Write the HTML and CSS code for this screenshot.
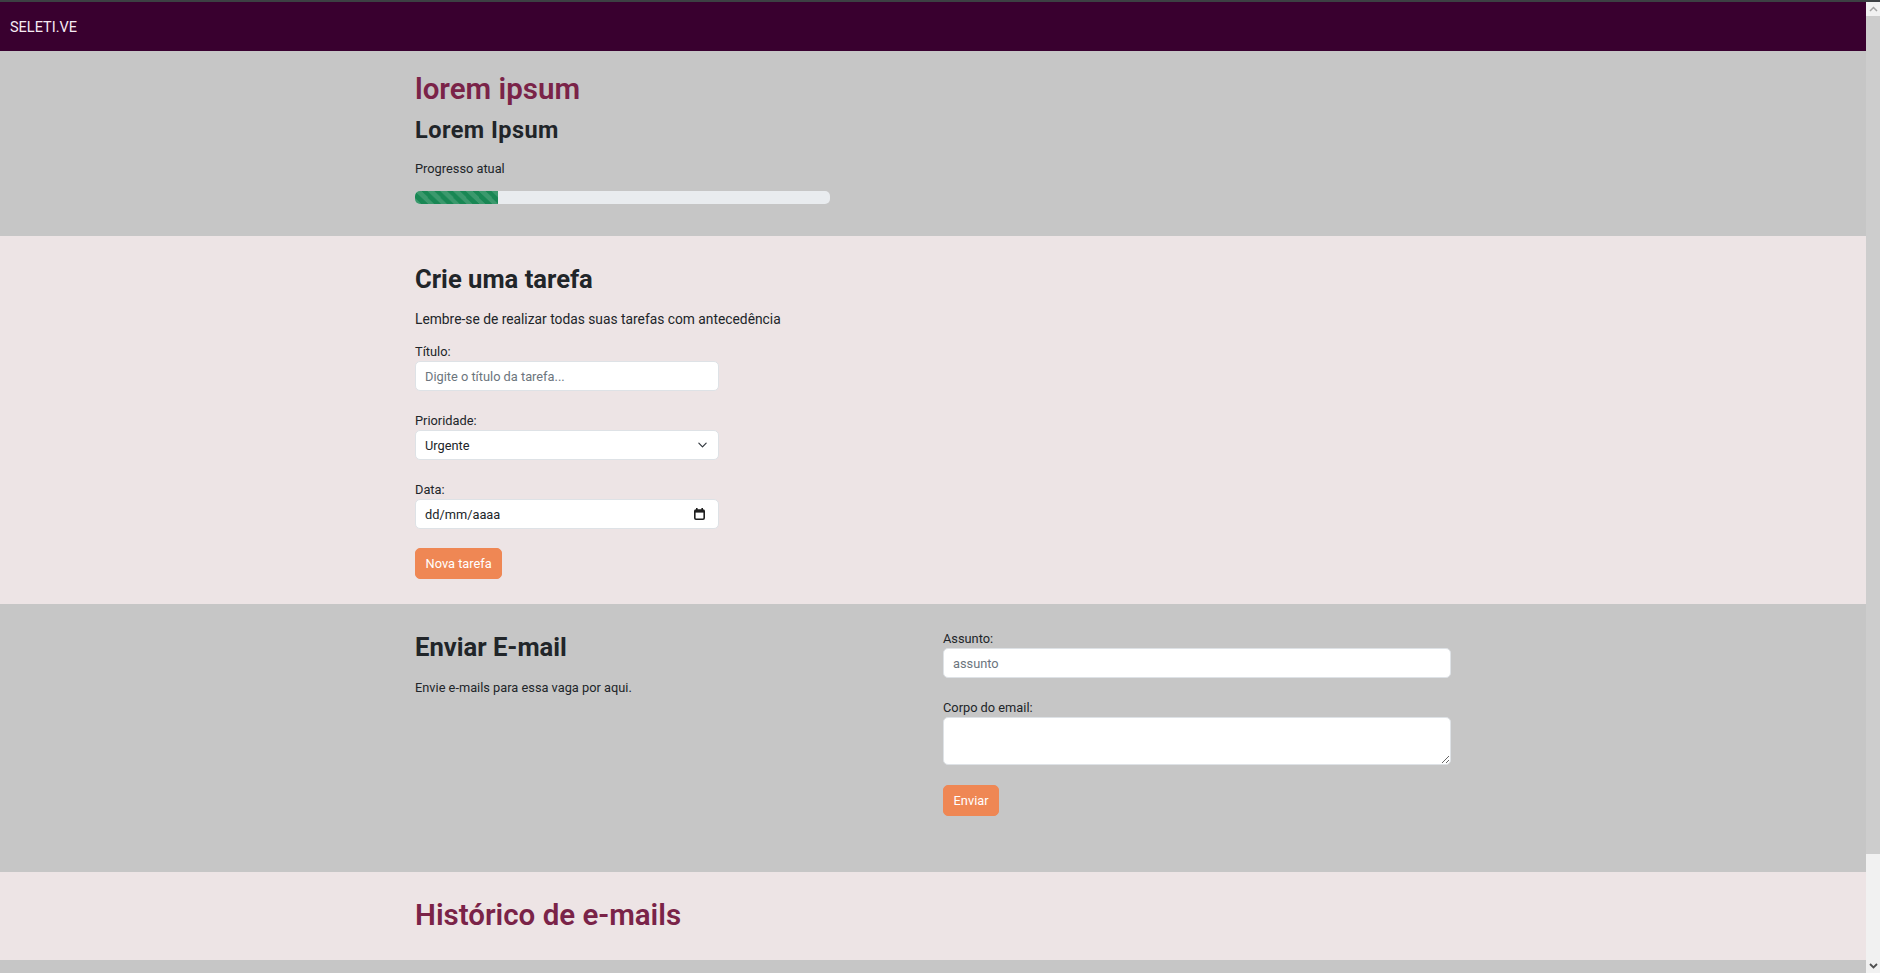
FILE: index.html
```html
<!DOCTYPE html>
<html lang="pt-BR">
<head>
<meta charset="utf-8">
<title>SELETI.VE</title>
<link rel="stylesheet" href="styles.css">
</head>
<body>
<div class="topline"></div>
<div class="window">
  <div class="page">
    <nav class="navbar"><span class="brand">SELETI.VE</span></nav>

    <section class="band band-gray hero">
      <div class="container">
        <h1 class="title-accent">lorem ipsum</h1>
        <h3 class="subtitle">Lorem Ipsum</h3>
        <p class="progress-label">Progresso atual</p>
        <div class="progress"><div class="progress-bar" style="width:20%"></div></div>
      </div>
    </section>

    <section class="band band-pink task">
      <div class="container">
        <h2 class="section-title">Crie uma tarefa</h2>
        <p class="lead-text lead-large">Lembre-se de realizar todas suas tarefas com antecedência</p>
        <div class="task-form">
          <div class="field">
            <label class="label">Título:</label>
            <input class="control" type="text" placeholder="Digite o título da tarefa...">
          </div>
          <div class="field">
            <label class="label">Prioridade:</label>
            <select class="control select"><option>Urgente</option></select>
          </div>
          <div class="field">
            <label class="label">Data:</label>
            <div class="control date-control">
              <span>dd/mm/aaaa</span>
              <svg class="cal-icon" width="11" height="12" viewBox="0 0 11 12"><rect x="2" y="0" width="1.6" height="2.5" fill="#1f1f1f"/><rect x="7.4" y="0" width="1.6" height="2.5" fill="#1f1f1f"/><rect x="0.8" y="2" width="9.4" height="9.2" rx="1.2" fill="none" stroke="#1f1f1f" stroke-width="1.6"/><rect x="0.8" y="2" width="9.4" height="2.6" fill="#1f1f1f"/></svg>
            </div>
          </div>
          <button class="btn">Nova tarefa</button>
        </div>
      </div>
    </section>

    <section class="band band-gray email">
      <div class="container email-grid">
        <div class="email-intro">
          <h2 class="section-title">Enviar E-mail</h2>
          <p class="lead-text">Envie e-mails para essa vaga por aqui.</p>
        </div>
        <div class="email-form">
          <div class="field first">
            <label class="label">Assunto:</label>
            <input class="control" type="text" placeholder="assunto">
          </div>
          <div class="field">
            <label class="label">Corpo do email:</label>
            <textarea class="control textarea"></textarea>
          </div>
          <button class="btn">Enviar</button>
        </div>
      </div>
    </section>

    <section class="band band-pink history">
      <div class="container">
        <h2 class="title-accent">Histórico de e-mails</h2>
      </div>
    </section>

    <section class="band band-gray rest"></section>
  </div>
  <div class="scrollbar">
    <div class="sb-btn sb-up"><svg width="9" height="6" viewBox="0 0 9 6"><path d="M1 5 4.5 1.5 8 5" fill="none" stroke="#a3a3a3" stroke-width="1.5"/></svg></div>
    <div class="sb-thumb"></div>
    <div class="sb-track"></div>
    <div class="sb-btn sb-down"><svg width="9" height="6" viewBox="0 0 9 6"><path d="M1 1 4.5 4.5 8 1" fill="none" stroke="#505050" stroke-width="1.8"/></svg></div>
  </div>
</div>
</body>
</html>
```

FILE: styles.css
```css
* { box-sizing: border-box; }

html, body {
  margin: 0;
  padding: 0;
  height: 973px;
  overflow: hidden;
}

body {
  font-family: Roboto, "Liberation Sans", sans-serif;
  font-size: 12.8px;
  line-height: 19px;
  color: #212529;
  background: #c6c6c6;
}

.topline {
  height: 2px;
  background: #3c4043;
}

.window {
  display: flex;
  height: 971px;
  overflow: hidden;
}

.page {
  flex: 1;
  overflow: hidden;
  display: flex;
  flex-direction: column;
}

.navbar {
  height: 49px;
  flex: none;
  background: #39002f;
  display: flex;
  align-items: center;
  padding-left: 10px;
  padding-top: 3px;
}

.brand {
  color: #f6ebf3;
  font-size: 14.5px;
  line-height: 20px;
}

.band { flex: none; }
.band-gray { background: #c6c6c6; }
.band-pink { background: #ede4e5; }

.container {
  width: 1056px;
  margin: 0 auto;
  padding: 0 10px;
}

h1, h2, h3, p { margin: 0; }

/* hero */
.hero { padding: 21px 0 32px; }

.title-accent {
  font-size: 29.5px;
  line-height: 34px;
  font-weight: 600;
  color: #7a2348;
}

.subtitle {
  margin-top: 11px;
  font-size: 23.5px;
  line-height: 27px;
  font-weight: 700;
  letter-spacing: 0.45px;
  color: #212529;
}

.progress-label { margin-top: 15px; }

.progress {
  margin-top: 13px;
  width: 415px;
  height: 13px;
  background: #e9ecef;
  border-radius: 5px;
  overflow: hidden;
  display: flex;
}

.progress-bar {
  background-color: #198754;
  background-image: linear-gradient(45deg, rgba(255,255,255,.15) 25%, transparent 25%, transparent 50%, rgba(255,255,255,.15) 50%, rgba(255,255,255,.15) 75%, transparent 75%, transparent);
  background-size: 12.8px 12.8px;
}

/* sections */
.section-title {
  font-size: 25.6px;
  line-height: 31px;
  font-weight: 700;
  color: #212529;
}

.lead-text { margin-top: 15px; }
.lead-large { font-size: 13.8px; }

.task { padding: 28px 0 25px; }

.task-form {
  width: 304px;
  margin-top: 13px;
}

.field { margin-bottom: 20px; }
.field:last-of-type { margin-bottom: 19px; }

.label { display: block; }

.control {
  display: block;
  width: 100%;
  height: 30px;
  margin: 0;
  padding: 0 9px;
  font-family: inherit;
  font-size: 12.8px;
  color: #212529;
  background: #fff;
  border: 1px solid #dee2e6;
  border-radius: 5px;
  outline: none;
}

.control::placeholder { color: #6c757d; }

.select {
  appearance: none;
  -webkit-appearance: none;
  background-image: url("data:image/svg+xml,%3csvg xmlns='http://www.w3.org/2000/svg' viewBox='0 0 16 16'%3e%3cpath fill='none' stroke='%23343a40' stroke-linecap='round' stroke-linejoin='round' stroke-width='2' d='m2 5 6 6 6-6'/%3e%3c/svg%3e");
  background-repeat: no-repeat;
  background-position: right 9.6px center;
  background-size: 12.8px 9.6px;
}

.date-control {
  display: flex;
  align-items: center;
  justify-content: space-between;
  padding-right: 13px;
}

.cal-icon { display: block; }

.btn {
  display: block;
  height: 31px;
  padding: 0 9.6px;
  font-family: inherit;
  font-size: 12.8px;
  color: #fff;
  background: #ef8754;
  border: 1px solid #ef8754;
  border-radius: 5px;
}

/* email */
.email { padding: 25px 0 56px; }

.email-grid {
  display: grid;
  grid-template-columns: 1fr 1fr;
  column-gap: 20px;
  align-items: start;
}

.email-intro .section-title { margin-top: 3px; }

.email-form .field { margin-bottom: 20px; }

.textarea {
  height: 48px;
  resize: vertical;
  padding-top: 5px;
}

/* history */
.history { padding: 26px 0 28px; }

.rest { flex: 1; }

/* scrollbar */
.scrollbar {
  width: 14px;
  flex: none;
  display: flex;
  flex-direction: column;
  background: #f1f1f1;
}

.sb-btn {
  height: 14px;
  flex: none;
  display: flex;
  align-items: center;
  justify-content: center;
  background: #f1f1f1;
}

.sb-thumb {
  height: 838px;
  flex: none;
  background: #cdcdcd;
}

.sb-track { flex: 1; }
```
